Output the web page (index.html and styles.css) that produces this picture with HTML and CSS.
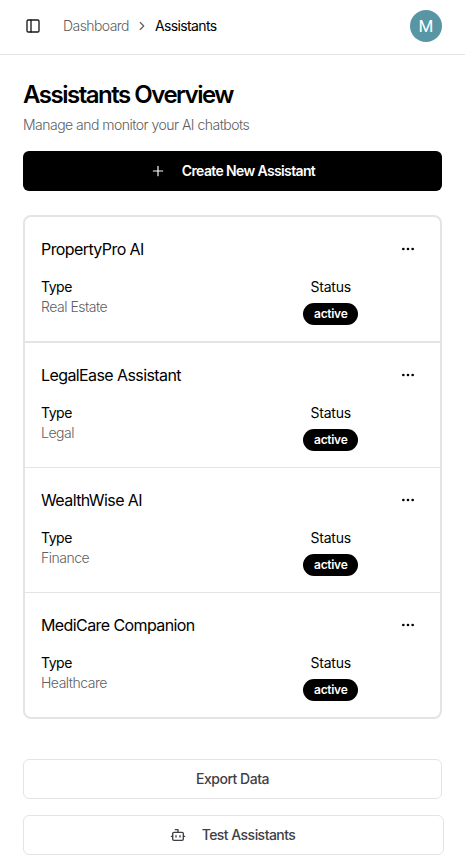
FILE: index.html
```html
<!DOCTYPE html>
<html lang="en">
<head>
<meta charset="utf-8">
<title>Assistants</title>
<link rel="stylesheet" href="styles.css">
</head>
<body>
<svg class="defs" aria-hidden="true">
  <symbol id="dots" viewBox="0 0 24 24"><circle cx="12" cy="12" r="1"/><circle cx="19" cy="12" r="1"/><circle cx="5" cy="12" r="1"/></symbol>
</svg>
<header class="topbar">
  <svg class="icon panel" viewBox="0 0 24 24"><rect width="18" height="18" x="3" y="3" rx="2"/><path d="M9 3v18"/></svg>
  <nav class="crumbs">
    <a class="crumb-link">Dashboard</a>
    <svg class="icon chevron" viewBox="0 0 24 24"><path d="m9 18 6-6-6-6"/></svg>
    <span class="crumb-page">Assistants</span>
  </nav>
  <div class="avatar">M</div>
</header>
<main class="content">
  <h1>Assistants Overview</h1>
  <p class="subtitle">Manage and monitor your AI chatbots</p>
  <button class="btn primary"><svg class="icon" viewBox="0 0 24 24"><path d="M5 12h14M12 5v14"/></svg><span>Create New Assistant</span></button>
  <section class="list">
    <article class="row">
      <div class="row-head"><h2>PropertyPro AI</h2><svg class="icon dots"><use href="#dots"/></svg></div>
      <div class="row-body">
        <div class="type"><div class="label">Type</div><div class="value">Real Estate</div></div>
        <div class="status"><div class="label">Status</div><span class="badge">active</span></div>
      </div>
    </article>
    <article class="row">
      <div class="row-head"><h2>LegalEase Assistant</h2><svg class="icon dots"><use href="#dots"/></svg></div>
      <div class="row-body">
        <div class="type"><div class="label">Type</div><div class="value">Legal</div></div>
        <div class="status"><div class="label">Status</div><span class="badge">active</span></div>
      </div>
    </article>
    <article class="row">
      <div class="row-head"><h2>WealthWise AI</h2><svg class="icon dots"><use href="#dots"/></svg></div>
      <div class="row-body">
        <div class="type"><div class="label">Type</div><div class="value">Finance</div></div>
        <div class="status"><div class="label">Status</div><span class="badge">active</span></div>
      </div>
    </article>
    <article class="row">
      <div class="row-head"><h2>MediCare Companion</h2><svg class="icon dots"><use href="#dots"/></svg></div>
      <div class="row-body">
        <div class="type"><div class="label">Type</div><div class="value">Healthcare</div></div>
        <div class="status"><div class="label">Status</div><span class="badge">active</span></div>
      </div>
    </article>
  </section>
  <div class="actions">
    <button class="btn outline">Export Data</button>
    <button class="btn outline wide"><svg class="icon" viewBox="0 0 24 24"><path d="M12 8V4H8"/><rect width="16" height="12" x="4" y="8" rx="2"/><path d="M2 14h2M20 14h2M15 13v2M9 13v2"/></svg><span>Test Assistants</span></button>
  </div>
</main>
</body>
</html>
```

FILE: styles.css
```css
* { box-sizing: border-box; }
body {
  margin: 0;
  height: 861px;
  overflow: hidden;
  background: #fff;
  color: #000;
  font: 400 14px/20px Inter, sans-serif;
  letter-spacing: -0.04em;
}
h1, h2, p { margin: 0; }
.defs { position: absolute; width: 0; height: 0; }
.icon {
  width: 16px;
  height: 16px;
  flex: none;
  fill: none;
  stroke: currentColor;
  stroke-width: 2;
  stroke-linecap: round;
  stroke-linejoin: round;
}
.topbar {
  display: flex;
  align-items: center;
  height: 55px;
  padding: 0 23px 2px 25px;
  border-bottom: 1px solid #e4e4e4;
}
.panel { color: #18181b; }
.crumbs { display: flex; align-items: center; gap: 6px; margin-left: 22px; }
.crumb-link, .chevron { color: #606060; }
.crumb-link, .subtitle, .value { font-weight: 300; }
.crumb-page { letter-spacing: -0.045em; }
.chevron { width: 14px; height: 14px; }
.avatar {
  display: grid;
  place-items: center;
  width: 32px;
  height: 32px;
  margin-left: auto;
  border-radius: 50%;
  background: #5896a5;
  color: #fff;
  font: 400 17px/32px Roboto, sans-serif;
  letter-spacing: 0;
}
.content { padding: 24px 23px 0; }
h1 { font-size: 24px; line-height: 32px; font-weight: 600; letter-spacing: -0.062em; }
.subtitle { margin-top: 4px; color: #606060; letter-spacing: -0.037em; }
.btn {
  display: flex;
  align-items: center;
  justify-content: center;
  gap: 16px;
  width: 100%;
  height: 40px;
  padding: 0 16px;
  border: 0;
  border-radius: 6px;
  font: inherit;
  font-weight: 500;
  letter-spacing: inherit;
}
.primary { margin-top: 16px; background: #000; color: #fff; font-weight: 600; letter-spacing: -0.045em; }
.primary .icon { stroke-width: 1.75; }
.list {
  margin-top: 24px;
  border: 2px solid #e4e4e4;
  border-radius: 8px;
}
.row { height: 125px; padding: 16px; border-bottom: 1px solid #e4e4e4; }
.row:first-child { height: 126px; border-bottom-width: 2px; }
.row:last-child { height: 124px; border-bottom: 0; }
.row-head { display: flex; align-items: center; justify-content: space-between; height: 32px; padding-right: 8px; }
h2 { font-size: 16px; line-height: 24px; font-weight: 400; letter-spacing: -0.037em; }
.row-body { display: grid; grid-template-columns: 1fr 1fr; column-gap: 4px; margin-top: 12px; }
.label { font-weight: 400; letter-spacing: -0.035em; }
.value { color: #606060; letter-spacing: -0.035em; }
.status { display: flex; flex-direction: column; align-items: center; gap: 6px; padding-left: 3px; }
.status .label { letter-spacing: -0.015em; }
.badge {
  width: 55px;
  height: 22px;
  border-radius: 11px;
  background: #000;
  color: #fff;
  font-size: 12px;
  line-height: 22px;
  font-weight: 600;
  letter-spacing: -0.025em;
  text-align: center;
}
.actions { display: flex; flex-direction: column; gap: 16px; margin-top: 40px; }
.outline { border: 1px solid #e4e4e7; background: #fff; color: #3f3f46; letter-spacing: -0.035em; }
.wide { width: 421px; padding-right: 18px; letter-spacing: -0.038em; }
```
